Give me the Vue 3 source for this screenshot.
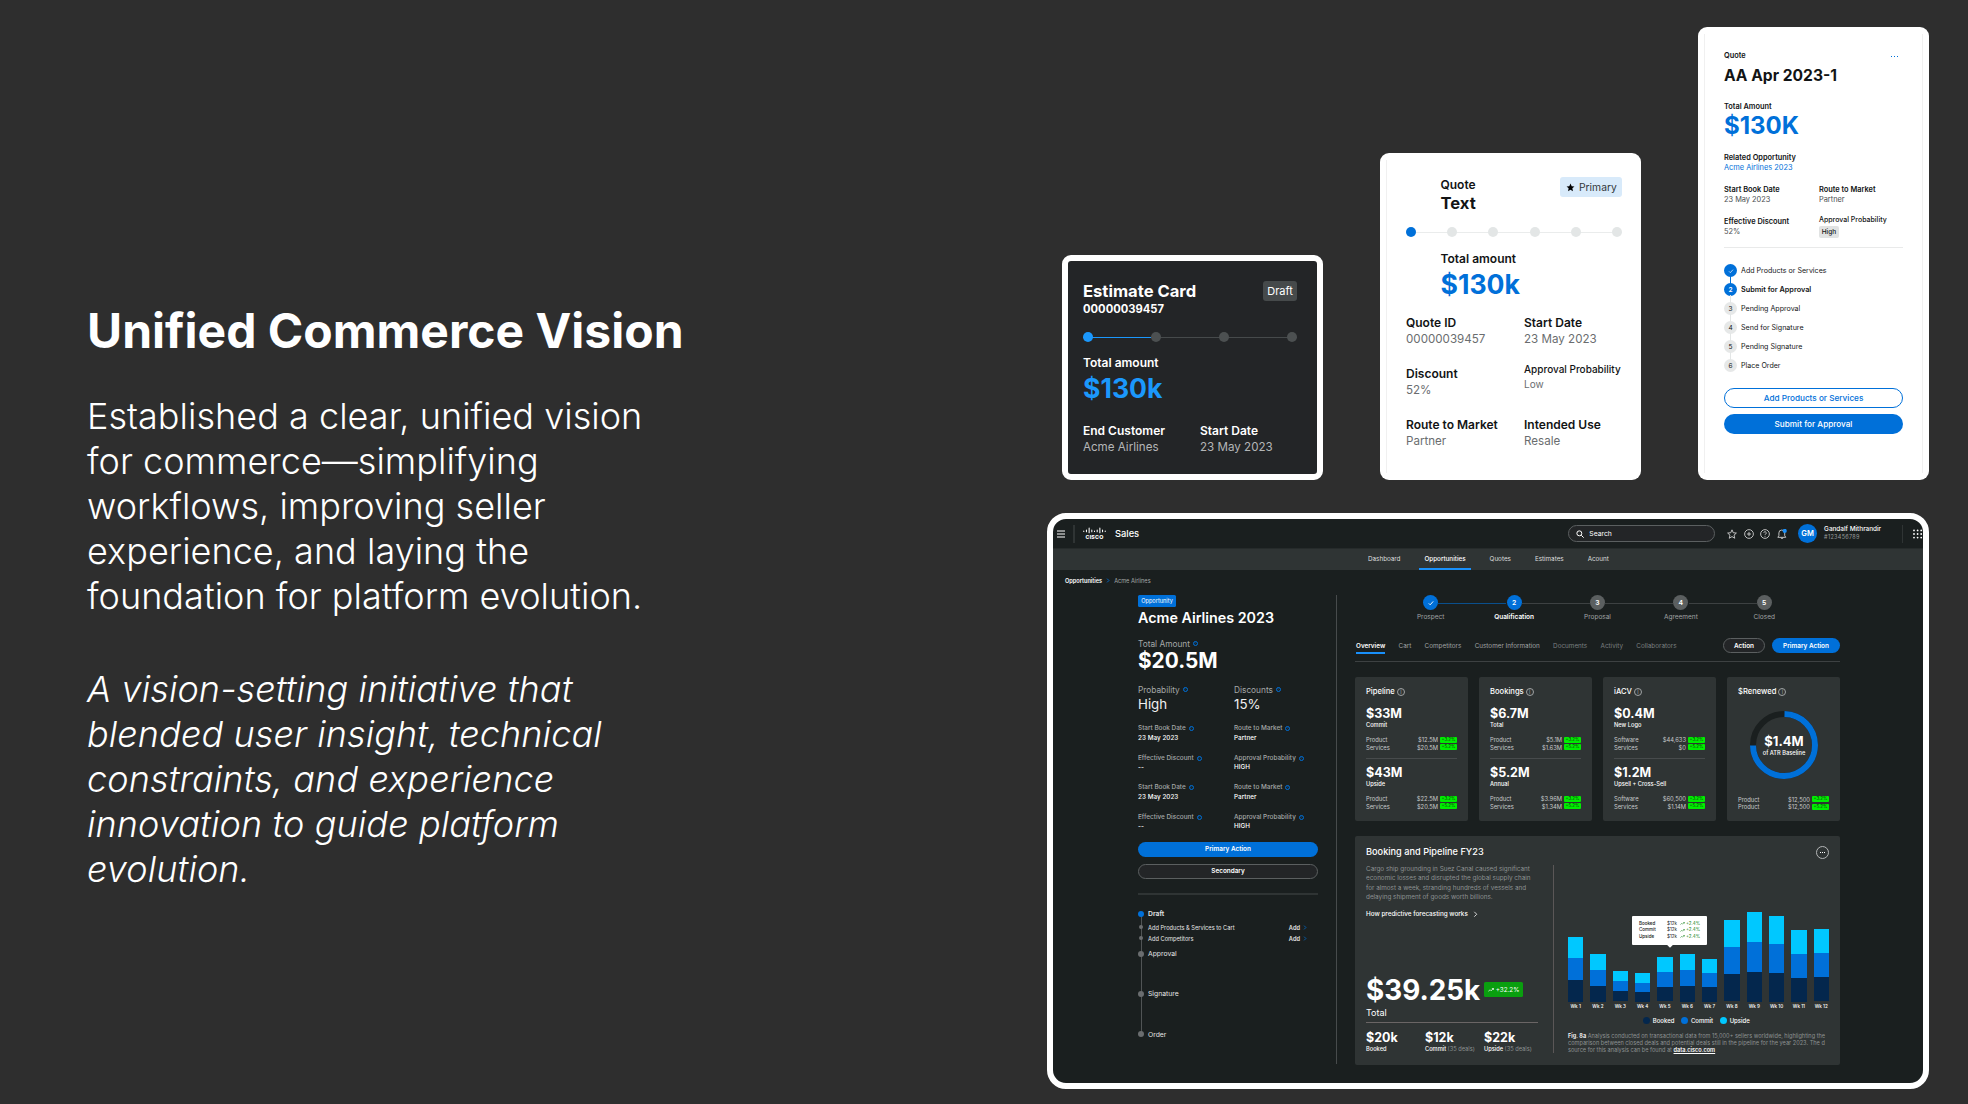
<template>
  <div class="slide">
    <section class="intro">
      <h1>Unified Commerce Vision</h1>
      <p>
        Established a clear, unified vision<br />for commerce—simplifying<br />workflows, improving seller<br />experience, and laying the<br />foundation for platform evolution.
      </p>
      <p class="italic">
        A vision-setting initiative that<br />blended user insight, technical<br />constraints, and experience<br />innovation to guide platform<br />evolution.
      </p>
    </section>

    <section class="showcase">
      <div class="cards">
        <article class="estimate-card">
          <div class="card-head">
            <div>
              <div class="card-title">Estimate Card</div>
              <div class="card-label card-number">00000039457</div>
            </div>
            <span class="draft-badge">Draft</span>
          </div>
          <div class="dots">
            <span v-for="n in 4" :key="n" class="dot" :class="{ active: n === 1 }"></span>
          </div>
          <div class="card-label">Total amount</div>
          <div class="card-amount">$130k</div>
          <div class="card-fields">
            <div v-for="field in estimateFields" :key="field.label">
              <div class="field-label">{{ field.label }}</div>
              <div class="field-value">{{ field.value }}</div>
            </div>
          </div>
        </article>

        <article class="quote-card">
          <div class="card-head">
            <div class="indent">
              <div class="card-label">Quote</div>
              <div class="card-title">Text</div>
            </div>
            <span class="primary-badge">
              <svg viewBox="0 0 24 24" fill="currentColor">
                <path d="M12 1.5l3.2 7 7.3.8-5.5 5 1.6 7.5L12 18l-6.6 3.8L7 14.3l-5.500-5 7.300-.8z"></path>
              </svg>
              Primary
            </span>
          </div>
          <div class="dots">
            <span v-for="n in 6" :key="n" class="dot" :class="{ active: n === 1 }"></span>
          </div>
          <div class="card-label indent">Total amount</div>
          <div class="card-amount indent">$130k</div>
          <div class="card-fields">
            <div v-for="field in quoteFields" :key="field.label" :class="{ compact: field.compact }">
              <div class="field-label">{{ field.label }}</div>
              <div class="field-value">{{ field.value }}</div>
            </div>
          </div>
        </article>

        <article class="detail-card">
          <div class="detail-top">
            <span class="small-label">Quote</span>
            <span class="more"><i></i><i></i><i></i></span>
          </div>
          <div class="detail-title">AA Apr 2023-1</div>
          <div class="small-label total-label">Total Amount</div>
          <div class="detail-amount">$130K</div>
          <div class="small-label">Related Opportunity</div>
          <div class="small-link">Acme Airlines 2023</div>
          <div class="detail-fields">
            <div>
              <div class="small-label">Start Book Date</div>
              <div class="small-value">23 May 2023</div>
            </div>
            <div>
              <div class="small-label">Route to Market</div>
              <div class="small-value">Partner</div>
            </div>
            <div>
              <div class="small-label">Effective Discount</div>
              <div class="small-value">52%</div>
            </div>
            <div class="approval">
              <div class="small-label">Approval Probability</div>
              <span class="high-badge">High</span>
            </div>
          </div>
          <ol class="detail-steps">
            <li v-for="(step, i) in quoteSteps" :key="step" :class="{ done: i < 2, current: i === 1 }">
              <span class="step-dot">
                <svg v-if="i === 0" viewBox="0 0 12 12" fill="none" stroke="currentColor" stroke-width="1">
                  <polyline points="3 6.5 5 8.5 9 4"></polyline>
                </svg>
                <template v-else>{{ i + 1 }}</template>
              </span>
              {{ step }}
            </li>
          </ol>
          <button class="pill outline">Add Products or Services</button>
          <button class="pill filled">Submit for Approval</button>
        </article>
      </div>

      <div class="dashboard">
        <header class="topbar">
          <svg class="menu" viewBox="0 0 8 8" stroke="#fff" stroke-width="1">
            <path d="M0 1h8M0 4h8M0 7h8"></path>
          </svg>
          <span class="bar-divider"></span>
          <div class="logo">
            <svg viewBox="0 0 24 7" fill="none" stroke="#fff" stroke-width="1.1" stroke-linecap="round">
              <path d="M.8 4v.5M3.6 3v1.800M6.400 .8v5M9.200 3v1.800M12 4v.5M14.800 3v1.800M17.600 .8v5M20.400 3v1.800M23.200 4v.5"></path>
            </svg>
            <span>CISCO</span>
          </div>
          <span class="app-name">Sales</span>
          <div class="search">
            <svg viewBox="0 0 12 12" fill="none" stroke="#fff" stroke-width="1.5">
              <circle cx="5" cy="5" r="3.7"></circle>
              <path d="M7.8 7.8L11.5 11.5"></path>
            </svg>
            Search
          </div>
          <div class="tools">
            <svg viewBox="0 0 24 24" fill="none" stroke="#dcdcdc" stroke-width="2">
              <path d="M12 2l3 7 7.5.7-5.6 5 1.7 7.5L12 18.2l-6.600 4 1.700-7.500-5.600-5L9 9z"></path>
            </svg>
            <svg viewBox="0 0 24 24" fill="none" stroke="#dcdcdc" stroke-width="2">
              <circle cx="12" cy="12" r="10.5"></circle>
              <path d="M12 7v10M7 12h10"></path>
            </svg>
            <svg viewBox="0 0 24 24" fill="none" stroke="#dcdcdc" stroke-width="2">
              <circle cx="12" cy="12" r="10.5"></circle>
              <path d="M9 9.5a3 3 0 1 1 4.5 2.600c-1 .6-1.500 1.100-1.500 2.400M12 16.500v2"></path>
            </svg>
            <svg viewBox="0 0 24 24" fill="none" stroke="#dcdcdc" stroke-width="2">
              <path d="M2 20h19l-2.5-4V9.500a7 7 0 0 0-14 0V16zM9.500 20.500a2.500 2.500 0 0 0 5 0"></path>
              <circle cx="18.5" cy="4.5" r="5" fill="#1990fa" stroke="none"></circle>
            </svg>
          </div>
          <span class="avatar">GM</span>
          <div class="user">
            <div class="user-name">Gandalf Mithrandir</div>
            <div class="user-id">#123456789</div>
          </div>
          <span class="bar-divider last"></span>
          <svg class="apps" viewBox="0 0 10 10" fill="#fff">
            <template v-for="r in 3" :key="r">
              <circle v-for="c in 3" :key="c" :cx="c * 3.6 - 2.6" :cy="r * 3.6 - 2.2" r="0.9"></circle>
            </template>
          </svg>
        </header>

        <nav class="main-nav">
          <a v-for="item in navItems" :key="item" :class="{ active: item === 'Opportunities' }">{{ item }}</a>
        </nav>

        <div class="breadcrumb">
          <b>Opportunities</b>
          <svg viewBox="0 0 6 8" fill="none" stroke="#0070d9" stroke-width="1.4"><path d="M1.5 1l3 3-3 3"></path></svg>
          <span>Acme Airlines</span>
        </div>

        <div class="workspace">
          <aside class="summary">
            <span class="opp-badge">Opportunity</span>
            <h2>Acme Airlines 2023</h2>
            <div class="sum-label">Total Amount <i class="info">i</i></div>
            <div class="sum-total">$20.5M</div>
            <div class="sum-pair">
              <div>
                <div class="sum-label">Probability <i class="info">i</i></div>
                <div class="sum-value">High</div>
              </div>
              <div>
                <div class="sum-label">Discounts <i class="info">i</i></div>
                <div class="sum-value">15%</div>
              </div>
            </div>
            <div class="sum-grid">
              <div v-for="(f, i) in summaryFields" :key="i">
                <div class="tiny-label">{{ f.label }} <i class="info">i</i></div>
                <div class="tiny-value">{{ f.value }}</div>
              </div>
            </div>
            <button class="dash-btn primary">Primary Action</button>
            <button class="dash-btn secondary">Secondary</button>
            <div class="sum-rule"></div>
            <ul class="timeline">
              <li class="draft">Draft</li>
              <li class="sub">
                Add Products &amp; Services to Cart
                <span class="add">Add <svg viewBox="0 0 6 8" fill="none" stroke="#0070d9" stroke-width="1.2"><path d="M1.5 1l3 3-3 3"></path></svg></span>
              </li>
              <li class="sub">
                Add Competitors
                <span class="add">Add <svg viewBox="0 0 6 8" fill="none" stroke="#0070d9" stroke-width="1.2"><path d="M1.5 1l3 3-3 3"></path></svg></span>
              </li>
              <li class="approval-item">Approval</li>
              <li class="far">Signature</li>
              <li class="far">Order</li>
            </ul>
          </aside>

          <span class="column-line"></span>

          <main class="content">
            <ol class="stages">
              <li v-for="(stage, i) in stages" :key="stage" :class="{ done: i < 2, current: i === 1 }">
                <span class="stage-dot">
                  <svg v-if="i === 0" viewBox="0 0 12 12" fill="none" stroke="currentColor" stroke-width="0.9">
                    <polyline points="3.8 6.4 5.2 7.8 8.2 4.4"></polyline>
                  </svg>
                  <template v-else>{{ i + 1 }}</template>
                </span>
                <span class="stage-name">{{ stage }}</span>
              </li>
            </ol>

            <div class="tab-row">
              <div class="tabs">
                <a v-for="(tab, i) in tabs" :key="tab" :class="{ active: i === 0, dim: i > 3 }">{{ tab }}</a>
              </div>
              <button class="dash-btn secondary action">Action</button>
              <button class="dash-btn primary primary-action">Primary Action</button>
            </div>

            <div class="metrics">
              <div v-for="m in metrics" :key="m.title" class="metric">
                <div class="metric-title">{{ m.title }} <i class="info grey">i</i></div>
                <template v-for="(b, i) in m.blocks" :key="i">
                  <div v-if="i" class="metric-rule"></div>
                  <div class="metric-amount">{{ b.amount }}</div>
                  <div class="metric-note">{{ b.note }}</div>
                  <div class="metric-rows">
                    <div v-for="(row, j) in b.rows" :key="j" class="metric-row">
                      <span>{{ row[0] }}</span>
                      <span class="num">{{ row[1] }}</span>
                      <span class="delta">{{ j ? '+5.2%' : '+3.2%' }}</span>
                    </div>
                  </div>
                </template>
              </div>
              <div class="metric">
                <div class="metric-title">$Renewed <i class="info grey">i</i></div>
                <div class="donut">
                  <svg viewBox="0 0 68 68" fill="none" stroke-width="6">
                    <circle cx="34" cy="34" r="31" stroke="#1a1f1f"></circle>
                    <path d="M34.5 3A31 31 0 1 1 3 34.5" stroke="#0070d9"></path>
                  </svg>
                  <div class="donut-text">
                    <div class="metric-amount">$1.4M</div>
                    <div class="metric-note">of ATR Baseline</div>
                  </div>
                </div>
                <div class="metric-rows">
                  <div v-for="n in 2" :key="n" class="metric-row">
                    <span>Product</span>
                    <span class="num">$12,500</span>
                    <span class="delta">{{ n > 1 ? '+5.2%' : '+3.2%' }}</span>
                  </div>
                </div>
              </div>
            </div>

            <div class="panel">
              <div class="panel-head">
                <h3>Booking and Pipeline FY23</h3>
                <span class="round-more"><i></i><i></i><i></i></span>
              </div>
              <div class="panel-body">
                <div class="panel-left">
                  <p>
                    Cargo ship grounding in Suez Canal caused significant<br />economic losses and disrupted the global supply chain<br />for almost a week, stranding hundreds of vessels and<br />delaying shipment of goods worth billions.
                  </p>
                  <div class="how">
                    How predictive forecasting works
                    <svg viewBox="0 0 6 8" fill="none" stroke="#e8e8e8" stroke-width="1.1"><path d="M1.5 1l3 3-3 3"></path></svg>
                  </div>
                  <div class="big">
                    <span class="big-amount">$39.25k</span>
                    <span class="big-badge">
                      <svg viewBox="0 0 12 8" fill="none" stroke="#fff" stroke-width="1.4"><path d="M.5 7l3.5-3.5 2 2L11 1.2M7.8 1H11.200v3"></path></svg>
                      +32.2%
                    </span>
                  </div>
                  <div class="big-note">Total</div>
                  <div class="stats">
                    <div v-for="s in stats" :key="s.label">
                      <div class="metric-amount">{{ s.amount }}</div>
                      <div class="metric-note">{{ s.label }} <span v-if="s.deals">{{ s.deals }}</span></div>
                    </div>
                  </div>
                </div>
                <div class="panel-right">
                  <div class="chart">
                    <div v-for="(h, i) in barHeights" :key="i" class="bar-col">
                      <div class="bar" :style="{ height: h + 'px' }"><i></i><i></i><i></i></div>
                      <span>Wk {{ i + 1 }}</span>
                    </div>
                    <div class="tooltip">
                      <div v-for="name in series" :key="name">
                        <b>{{ name }}</b><span>$12k</span>
                        <em><svg viewBox="0 0 12 8" fill="none" stroke="currentColor" stroke-width="1.4"><path d="M.5 7l3.5-3.5 2 2L11 1.2M7.8 1H11.200v3"></path></svg>+2.4%</em>
                      </div>
                    </div>
                  </div>
                  <div class="legend">
                    <span v-for="name in series" :key="name" :class="name.toLowerCase()"><i></i>{{ name }}</span>
                  </div>
                  <p class="caption">
                    <b>Fig. 8a</b> Analysis conducted on transactional data from 15,000+ sellers worldwide, highlighting the<br />comparison between closed deals and potential deals still in the pipeline for the year 2023. The d<br />source for this analysis can be found at <u>data.cisco.com</u>
                  </p>
                </div>
              </div>
            </div>
          </main>
        </div>
      </div>
    </section>
  </div>
</template>

<script setup>
const estimateFields = [
  { label: 'End Customer', value: 'Acme Airlines' },
  { label: 'Start Date', value: '23 May 2023' }
]

const quoteFields = [
  { label: 'Quote ID', value: '00000039457' },
  { label: 'Start Date', value: '23 May 2023' },
  { label: 'Discount', value: '52%' },
  { label: 'Approval Probability', value: 'Low', compact: true },
  { label: 'Route to Market', value: 'Partner' },
  { label: 'Intended Use', value: 'Resale' }
]

const quoteSteps = [
  'Add Products or Services',
  'Submit for Approval',
  'Pending Approval',
  'Send for Signature',
  'Pending Signature',
  'Place Order'
]

const navItems = ['Dashboard', 'Opportunities', 'Quotes', 'Estimates', 'Acount']

const fieldRows = [
  { label: 'Start Book Date', value: '23 May 2023' },
  { label: 'Route to Market', value: 'Partner' },
  { label: 'Effective Discount', value: '--' },
  { label: 'Approval Probability', value: 'HIGH' }
]
const summaryFields = [...fieldRows, ...fieldRows]

const stages = ['Prospect', 'Qualification', 'Proposal', 'Agreement', 'Closed']

const tabs = ['Overview', 'Cart', 'Competitors', 'Customer Information', 'Documents', 'Activity', 'Collaborators']

const metrics = [
  {
    title: 'Pipeline',
    blocks: [
      { amount: '$33M', note: 'Commit', rows: [['Product', '$12.5M'], ['Services', '$20.5M']] },
      { amount: '$43M', note: 'Upside', rows: [['Product', '$22.5M'], ['Services', '$20.5M']] }
    ]
  },
  {
    title: 'Bookings',
    blocks: [
      { amount: '$6.7M', note: 'Total', rows: [['Product', '$5.1M'], ['Services', '$1.63M']] },
      { amount: '$5.2M', note: 'Annual', rows: [['Product', '$3.96M'], ['Services', '$1.34M']] }
    ]
  },
  {
    title: 'iACV',
    blocks: [
      { amount: '$0.4M', note: 'New Logo', rows: [['Software', '$44,633'], ['Services', '$0']] },
      { amount: '$1.2M', note: 'Upsell + Cross-Sell', rows: [['Software', '$60,500'], ['Services', '$1.14M']] }
    ]
  }
]

const stats = [
  { amount: '$20k', label: 'Booked' },
  { amount: '$12k', label: 'Commit', deals: '(35 deals)' },
  { amount: '$22k', label: 'Upside', deals: '(35 deals)' }
]

const series = ['Booked', 'Commit', 'Upside']
const barHeights = [65, 48, 31, 28.5, 44.5, 48, 42.5, 82, 90, 86, 72, 73]
</script>

<style>
body {
  background: #2e2e2e;
}
</style>

<style scoped>
.slide {
  display: flex;
  width: 1968px;
  height: 1104px;
  overflow: hidden;
  background: #2e2e2e;
  color: #fff;
  font-family: Inter, "Liberation Sans", sans-serif;
}

.slide *,
.slide *::before,
.slide *::after {
  box-sizing: border-box;
}

h1, h2, h3, p, ol, ul {
  margin: 0;
  padding: 0;
  list-style: none;
}

svg {
  display: block;
  flex-shrink: 0;
}

i {
  font-style: normal;
}

button {
  display: flex;
  align-items: center;
  justify-content: center;
  padding: 0;
  border: 0;
  font-family: inherit;
  white-space: nowrap;
}

/* intro copy */
.intro {
  width: 1047px;
  padding: 302px 0 0 87px;
  white-space: nowrap;
}

.intro h1 {
  font-size: 48px;
  line-height: 58px;
  font-weight: 700;
}

.intro p {
  margin-top: 34px;
  font-size: 36px;
  line-height: 45px;
  font-weight: 300;
  letter-spacing: 0.03px;
}

.intro p.italic {
  margin-top: 48px;
  font-style: italic;
  letter-spacing: 0.1px;
}

/* cards */
.showcase {
  width: 882px;
  padding-top: 27px;
}

.cards {
  display: flex;
  align-items: flex-end;
  justify-content: space-between;
  height: 453px;
  padding-left: 15px;
  white-space: nowrap;
}

.estimate-card {
  width: 261px;
  height: 225px;
  padding: 20px 20px 0 15px;
  border: 6px solid #fff;
  border-radius: 9px;
  background: #232527;
}

.card-head {
  display: flex;
  justify-content: space-between;
  align-items: flex-start;
}

.card-title {
  font-size: 16.6px;
  line-height: 20px;
  font-weight: 700;
}

.card-label {
  font-size: 12px;
  line-height: 16px;
  font-weight: 600;
}

.card-number {
  font-size: 11.2px;
  font-weight: 700;
}

.card-amount {
  margin-top: 1px;
  margin-bottom: -1px;
  font-size: 26.6px;
  line-height: 32px;
  font-weight: 700;
  color: #1b98fc;
}

.draft-badge {
  width: 34px;
  height: 20px;
  border-radius: 3px;
  background: #464a4b;
  font-size: 11px;
  line-height: 20px;
  text-align: center;
}

.dots {
  display: flex;
  justify-content: space-between;
  margin: 15px 0 13px;
  background: linear-gradient(#464a4b, #464a4b) center / 100% 1px no-repeat;
}

.estimate-card .dots {
  background-image: linear-gradient(90deg, #1b98fc 32%, #464a4b 32%);
}

.dot {
  width: 10px;
  height: 10px;
  border-radius: 50%;
  background: #4c5051;
}

.dot.active {
  background: #1b98fc;
}

.card-fields {
  display: grid;
  grid-template-columns: 117px 1fr;
  row-gap: 17px;
  margin-top: 19px;
}

.field-label {
  font-size: 12px;
  line-height: 17px;
  font-weight: 600;
}

.field-value {
  font-size: 11.6px;
  line-height: 17px;
  color: #b4b6b7;
}

.quote-card {
  width: 261px;
  height: 327px;
  padding: 24px 19px 0 26px;
  border-radius: 9px;
  background: linear-gradient(#f0f0f0, #f0f0f0) 6px 7px / 1px 313px no-repeat #fff;
  color: #121415;
}

.indent {
  padding-left: 34.5px;
}

.quote-card .dots {
  margin: 14px 0;
  background-image: linear-gradient(#eaecec, #eaecec);
}

.quote-card .dot {
  background: #e3e6e6;
}

.quote-card .dot.active {
  background: #0070d9;
}

.quote-card .card-amount {
  color: #0070d9;
}

.quote-card .card-fields {
  grid-template-columns: 118px 1fr;
  margin-top: 15px;
}

.quote-card .field-value {
  color: #6a6d6f;
}

.primary-badge {
  display: flex;
  align-items: center;
  gap: 4px;
  width: 62px;
  height: 20px;
  padding-left: 6px;
  border-radius: 3px;
  background: #d8eafa;
  font-size: 10.3px;
  color: #33383b;
}

.primary-badge svg {
  width: 9px;
  height: 9px;
  color: #000;
}

.compact {
  margin-top: -3px;
}

.compact .field-label,
.compact .field-value {
  font-size: 10px;
  line-height: 14.5px;
}

.compact .field-label {
  font-weight: 500;
}

.detail-card {
  width: 231px;
  height: 453px;
  padding: 24px 26px 0;
  border-radius: 9px;
  background:
    linear-gradient(#f0f0f0, #f0f0f0) 6px 7px / 1px 439px no-repeat,
    linear-gradient(#f0f0f0, #f0f0f0) 224px 7px / 1px 439px no-repeat,
    #fff;
  color: #121415;
}

.detail-top {
  display: flex;
  align-items: center;
  justify-content: space-between;
  height: 10px;
}

.more {
  display: flex;
  gap: 2px;
  margin-right: 5px;
}

.more i {
  width: 1px;
  height: 1px;
  background: #0070d9;
}

.small-label {
  font-size: 7.4px;
  line-height: 10px;
  font-weight: 600;
}

.small-value,
.small-link {
  font-size: 7.4px;
  line-height: 10px;
}

.small-value {
  color: #4a4d4f;
}

.small-link {
  color: #0070d9;
}

.detail-title {
  margin-top: 5px;
  font-size: 15.6px;
  line-height: 20px;
  font-weight: 700;
}

.total-label {
  margin-top: 16px;
}

.detail-amount {
  margin: 0 0 13px;
  font-size: 24px;
  line-height: 28px;
  font-weight: 700;
  color: #0070d9;
}

.detail-fields {
  display: grid;
  grid-template-columns: 95px 1fr;
  align-content: start;
  row-gap: 12px;
  height: 63px;
  margin-top: 12px;
  border-bottom: 1px solid #e9eaea;
}

.approval {
  margin-top: -2px;
}

.approval .small-label {
  font-size: 7px;
  font-weight: 500;
}

.high-badge {
  display: block;
  width: 20px;
  height: 12px;
  margin-top: 1px;
  border-radius: 2px;
  background: #e1e3e3;
  font-size: 6.5px;
  line-height: 12px;
  font-weight: 500;
  text-align: center;
}

.detail-steps {
  margin: 13px 0;
}

.detail-steps li {
  position: relative;
  display: flex;
  align-items: center;
  gap: 4px;
  height: 19px;
  font-size: 7.1px;
}

.detail-steps li.current {
  font-size: 7.3px;
}

.detail-steps li + li::before {
  content: "";
  position: absolute;
  left: 6px;
  top: -4px;
  width: 1px;
  height: 8px;
  background: #e3e6e6;
}

.detail-steps li.current::before {
  background: #0070d9;
}

.step-dot {
  display: flex;
  align-items: center;
  justify-content: center;
  width: 13px;
  height: 13px;
  border-radius: 50%;
  background: #e6e8e8;
  font-size: 6.5px;
}

.done .step-dot {
  background: #0070d9;
  color: #fff;
}

.step-dot svg {
  width: 8px;
  height: 8px;
}

.current {
  font-weight: 600;
}

.pill {
  width: 179px;
  height: 20px;
  border-radius: 10px;
  font-size: 8.2px;
  font-weight: 500;
}

.pill.outline {
  border: 1px solid #0070d9;
  background: #fff;
  color: #0070d9;
}

.pill.filled {
  margin-top: 6px;
  background: #0070d9;
  color: #fff;
}

/* dashboard */
.dashboard {
  height: 576px;
  margin-top: 33px;
  overflow: hidden;
  border: 6px solid #fff;
  border-radius: 19px;
  background: #1a1f1f;
  white-space: nowrap;
}

.topbar {
  display: flex;
  align-items: center;
  height: 30px;
  border-bottom: 1px solid #262b2b;
}

.menu {
  width: 8px;
  height: 8px;
  margin-left: 4px;
}

.bar-divider {
  width: 2px;
  height: 18px;
  margin-left: 8px;
  background: #2f3434;
}

.logo {
  width: 23px;
  margin-left: 8px;
  text-align: center;
}

.logo svg {
  width: 23px;
  height: 7px;
}

.logo span {
  display: block;
  font-size: 5.3px;
  line-height: 6px;
  font-weight: 800;
  letter-spacing: 0.2px;
}

.app-name {
  width: 454px;
  margin-left: 9px;
  font-size: 9.3px;
  font-weight: 500;
}

.search {
  display: flex;
  align-items: center;
  gap: 5px;
  width: 147px;
  height: 17px;
  padding-left: 7px;
  border: 1px solid #5b5f60;
  border-radius: 9px;
  background: #232527;
  font-size: 6.8px;
}

.search svg {
  width: 8px;
  height: 8px;
}

.tools {
  display: flex;
  gap: 6.7px;
  margin: 1px 0 0 12px;
}

.tools svg {
  width: 10px;
  height: 10px;
}

.avatar {
  width: 19px;
  height: 19px;
  margin-left: 11px;
  border-radius: 50%;
  background: #0070d9;
  font-size: 7.5px;
  line-height: 19px;
  font-weight: 600;
  text-align: center;
}

.user {
  width: 78px;
  margin-left: 7px;
}

.user-name {
  font-size: 6.4px;
  line-height: 8px;
  font-weight: 500;
}

.user-id {
  font-size: 5.5px;
  line-height: 9px;
  color: #999c9d;
  letter-spacing: 0.3px;
}

.bar-divider.last {
  width: 1px;
  margin-left: 0;
}

.apps {
  width: 10px;
  height: 10px;
  margin-left: 10px;
}

.main-nav {
  display: flex;
  gap: 14px;
  height: 21px;
  padding-left: 310px;
  background: #2f3434;
}

.main-nav a {
  padding: 0 5px;
  font-size: 6.3px;
  line-height: 20px;
  color: #dedfdf;
}

.main-nav a.active {
  border-bottom: 2px solid #1990fa;
  font-weight: 500;
  color: #fff;
}

.breadcrumb {
  display: flex;
  align-items: center;
  gap: 4px;
  height: 25px;
  padding: 0 0 4px 12px;
  font-size: 5.6px;
  color: #a5a8a8;
}

.breadcrumb b {
  font-weight: 600;
  color: #fff;
}

.breadcrumb svg {
  width: 4px;
  height: 5px;
}

.workspace {
  display: flex;
  padding-left: 85px;
}

.summary {
  width: 180px;
}

.opp-badge {
  display: block;
  width: 38px;
  height: 12px;
  border-radius: 1.5px;
  background: #0070d9;
  font-size: 5.6px;
  line-height: 12px;
  text-align: center;
}

.summary h2 {
  margin-top: 2px;
  font-size: 14.3px;
  line-height: 18px;
  font-weight: 600;
}

.sum-label {
  display: flex;
  align-items: center;
  gap: 3px;
  font-size: 8.3px;
  line-height: 12px;
  color: #a5a8a8;
}

h2 + .sum-label {
  margin-top: 10.5px;
}

.info {
  display: inline-block;
  width: 5px;
  height: 5px;
  border: 0.6px solid #0070d9;
  border-radius: 50%;
  font-size: 3.5px;
  line-height: 3.5px;
  font-weight: 400;
  text-align: center;
  color: #0070d9;
}

.sum-total {
  margin-top: -1px;
  font-size: 20.8px;
  line-height: 24px;
  font-weight: 700;
}

.sum-pair,
.sum-grid {
  display: grid;
  grid-template-columns: 96px 1fr;
}

.sum-pair {
  margin-top: 11px;
}

.sum-value {
  font-size: 13.3px;
  line-height: 16px;
  font-weight: 400;
  color: #f0f0f0;
}

.sum-grid {
  row-gap: 10.5px;
  margin: 12.5px 0 10px;
}

.tiny-label {
  display: flex;
  align-items: center;
  gap: 3px;
  font-size: 6.4px;
  line-height: 9.5px;
  font-weight: 500;
  color: #a5a8a8;
}

.tiny-value {
  font-size: 6.3px;
  line-height: 9.5px;
  font-weight: 500;
  letter-spacing: 0.05px;
  font-feature-settings: "calt" 0;
}

.dash-btn {
  height: 15px;
  border-radius: 8px;
  font-size: 6.4px;
  font-weight: 600;
  color: #fff;
}

.dash-btn.primary {
  background: #0070d9;
}

.dash-btn.secondary {
  border: 1px solid #5b5f60;
  background: #232527;
}

.summary .dash-btn {
  width: 180px;
}

.summary .dash-btn.secondary {
  margin-top: 7px;
}

.sum-rule {
  height: 2px;
  margin-top: 14px;
  background: #2f3434;
}

.timeline {
  position: relative;
  margin-top: 14px;
}

.timeline::before {
  content: "";
  position: absolute;
  left: 2.5px;
  top: 5px;
  width: 1px;
  height: 120px;
  background: #505455;
}

.timeline li {
  position: relative;
  display: flex;
  align-items: center;
  height: 10px;
  padding-left: 10px;
  font-size: 6.8px;
  color: #e6e6e6;
}

.timeline li::before {
  content: "";
  position: absolute;
  left: 0;
  top: 2px;
  width: 6px;
  height: 6px;
  border-radius: 50%;
  background: #6a6d6f;
}

.timeline li.draft {
  font-weight: 600;
}

.timeline li.draft::before {
  background: #0070d9;
}

.timeline li.sub {
  margin-top: 1px;
  font-size: 5.7px;
}

.timeline li.draft + .sub {
  margin-top: 3.5px;
}

.timeline li.sub::before {
  left: 1px;
  top: 3px;
  width: 4px;
  height: 4px;
}

.timeline .add {
  display: flex;
  align-items: center;
  gap: 3px;
  margin: 0 11px 0 auto;
  font-weight: 600;
}

.timeline .add svg {
  width: 4px;
  height: 5px;
}

.timeline li.approval-item {
  margin-top: 5.5px;
}

.timeline li.far {
  margin-top: 30.3px;
}

.column-line {
  width: 1px;
  height: 469px;
  margin: 0 18px;
  background: #474b4c;
}

.content {
  width: 485px;
}

.stages {
  display: flex;
  padding-left: 34px;
}

.stages li {
  position: relative;
  display: flex;
  flex-direction: column;
  align-items: center;
  width: 83.4px;
  color: #a0a3a4;
}

.stages li + li::before {
  content: "";
  position: absolute;
  left: -34px;
  top: 7.5px;
  width: 68px;
  height: 1px;
  background: #3d4142;
}

.stages li.current::before {
  background: #0a4f8c;
}

.stage-dot {
  display: flex;
  align-items: center;
  justify-content: center;
  width: 15px;
  height: 15px;
  border-radius: 50%;
  background: #5b5f60;
  font-size: 6.8px;
  font-weight: 600;
  color: #fff;
}

.stages .done .stage-dot {
  background: #0070d9;
}

.stage-dot svg {
  width: 12px;
  height: 12px;
}

.stage-name {
  margin-top: 2px;
  font-size: 6.5px;
  line-height: 10px;
}

.stages .current .stage-name {
  color: #fff;
}

.tab-row {
  display: flex;
  height: 24px;
  margin-top: 16px;
  border-bottom: 1px solid #3d4142;
}

.tabs {
  display: flex;
  gap: 13.3px;
  width: 368px;
  padding-left: 1px;
}

.tabs a {
  height: 16px;
  font-size: 6.35px;
  line-height: 16px;
  color: #a0a3a4;
}

.tabs a.dim {
  color: #7b7f80;
}

.tabs a.active {
  border-bottom: 2px solid #1990fa;
  font-weight: 600;
  color: #fff;
}

.action {
  width: 42px;
}

.primary-action {
  width: 68px;
  margin-left: 7px;
}

.metrics {
  display: grid;
  grid-template-columns: repeat(4, 113px);
  gap: 11px;
  margin-top: 15px;
}

.metric {
  height: 144px;
  padding: 9.5px 11px 0;
  border-radius: 2px;
  background: #2f3434;
}

.metric-title {
  display: flex;
  align-items: center;
  gap: 2px;
  margin-bottom: 9px;
  font-size: 7.6px;
  line-height: 10px;
  font-weight: 500;
}

.info.grey {
  width: 8px;
  height: 8px;
  border-color: #a0a3a4;
  font-size: 5.5px;
  line-height: 6px;
  color: #a0a3a4;
}

.metric-amount {
  font-size: 12.5px;
  line-height: 15.5px;
  font-weight: 700;
}

.metric-note {
  font-size: 5.7px;
  line-height: 8px;
  font-weight: 500;
}

.metric-rows {
  margin-top: 7px;
}

.metric-row {
  display: flex;
  align-items: center;
  height: 7.5px;
  font-size: 5.8px;
  color: #c8cacb;
}

.metric-row .num {
  margin-left: auto;
}

.delta {
  width: 17px;
  height: 6px;
  margin-left: 2px;
  border-radius: 1px;
  background: #00ee00;
  font-size: 4.5px;
  line-height: 6px;
  text-align: center;
  color: #123512;
}

.metric-rule {
  height: 1px;
  margin: 6.5px 0 6px;
  background: #474b4c;
}

.donut {
  display: grid;
  width: 68px;
  height: 68px;
  margin: 14px 0 0 12px;
}

.donut svg,
.donut-text {
  grid-area: 1 / 1;
}

.donut-text {
  padding-top: 23px;
  text-align: center;
}

.donut .metric-amount {
  font-size: 13px;
}

.donut + .metric-rows {
  margin-top: 17px;
}

.panel {
  height: 229px;
  margin-top: 15px;
  padding: 10px 11px 0;
  border-radius: 2px;
  background: #2f3434;
}

.panel-head {
  display: flex;
  align-items: center;
  justify-content: space-between;
  height: 12px;
}

.panel h3 {
  font-size: 9.2px;
  line-height: 12px;
  font-weight: 500;
}

.round-more {
  display: flex;
  align-items: center;
  justify-content: center;
  gap: 1px;
  width: 13px;
  height: 13px;
  border: 1px solid #b4b6b7;
  border-radius: 50%;
}

.round-more i {
  width: 1px;
  height: 1px;
  background: #fff;
}

.panel-body {
  display: flex;
  margin-top: 7px;
}

.panel-left {
  width: 188px;
  height: 188px;
  padding-right: 15px;
  border-right: 1px solid #5b5757;
}

.panel-left p {
  font-size: 6.35px;
  line-height: 9.3px;
  color: #8d9192;
}

.how {
  display: flex;
  align-items: center;
  gap: 5px;
  margin-top: 7.5px;
  font-size: 6.35px;
  line-height: 9px;
  font-weight: 500;
}

.how svg {
  width: 5px;
  height: 6.5px;
}

.big {
  display: flex;
  align-items: center;
  gap: 4px;
  height: 34px;
  margin-top: 54.3px;
}

.big-amount {
  font-size: 27.8px;
  line-height: 34px;
  font-weight: 700;
}

.big-badge {
  display: flex;
  align-items: center;
  justify-content: center;
  gap: 2px;
  width: 39px;
  height: 15px;
  border-radius: 1.5px;
  background: #0a9f0f;
  font-size: 6.3px;
}

.big-badge svg {
  width: 6px;
  height: 4px;
}

.big-note {
  height: 16px;
  font-size: 9px;
  line-height: 11px;
  border-bottom: 1px solid #6a6565;
}

.stats {
  display: grid;
  grid-template-columns: 59px 59px 1fr;
  margin-top: 7px;
}

.stats .metric-note span {
  font-weight: 400;
  color: #8d9192;
}

.panel-right {
  width: 261px;
  margin-left: 14px;
}

.chart {
  position: relative;
  display: flex;
  align-items: flex-end;
  justify-content: space-between;
  height: 145.5px;
}

.bar-col {
  display: flex;
  flex-direction: column;
  align-items: center;
  width: 15.3px;
}

.bar {
  display: flex;
  flex-direction: column;
  width: 100%;
}

.bar i {
  flex: 1;
  background: #04274d;
}

.bar i:nth-child(1) {
  background: #00c8ff;
}

.bar i:nth-child(2) {
  background: #0070d9;
}

.bar-col span {
  margin-top: 1px;
  font-size: 4.6px;
  line-height: 8px;
  font-weight: 500;
}

.tooltip {
  position: absolute;
  left: 64px;
  top: 51px;
  width: 75px;
  height: 29px;
  padding: 4.5px 7px;
  border-radius: 1px;
  background: #fff;
  font-size: 4.5px;
  color: #121415;
}

.tooltip::after {
  content: "";
  position: absolute;
  left: 36px;
  bottom: -2px;
  width: 4px;
  height: 4px;
  background: #fff;
  transform: rotate(45deg);
}

.tooltip div {
  display: grid;
  grid-template-columns: 28px 13px 1fr;
  align-items: center;
  line-height: 6.6px;
}

.tooltip b {
  font-weight: 500;
}

.tooltip em {
  display: flex;
  align-items: center;
  gap: 1px;
  font-style: normal;
  color: #0a7f0f;
}

.tooltip svg {
  width: 5px;
  height: 3px;
}

.legend {
  display: flex;
  justify-content: center;
  gap: 7px;
  margin: 5px 4px 0 0;
  font-size: 6px;
  line-height: 10px;
  font-weight: 500;
}

.legend span {
  display: flex;
  align-items: center;
  gap: 2.5px;
}

.legend i {
  width: 7px;
  height: 7px;
  border-radius: 50%;
  background: #04274d;
}

.legend .commit i {
  background: #0070d9;
}

.legend .upside i {
  background: #00c8ff;
}

.caption {
  margin-top: 7px;
  font-size: 5.6px;
  line-height: 7.4px;
  color: #8d9192;
}

.caption b,
.caption u {
  font-weight: 600;
  color: #fff;
}
</style>
